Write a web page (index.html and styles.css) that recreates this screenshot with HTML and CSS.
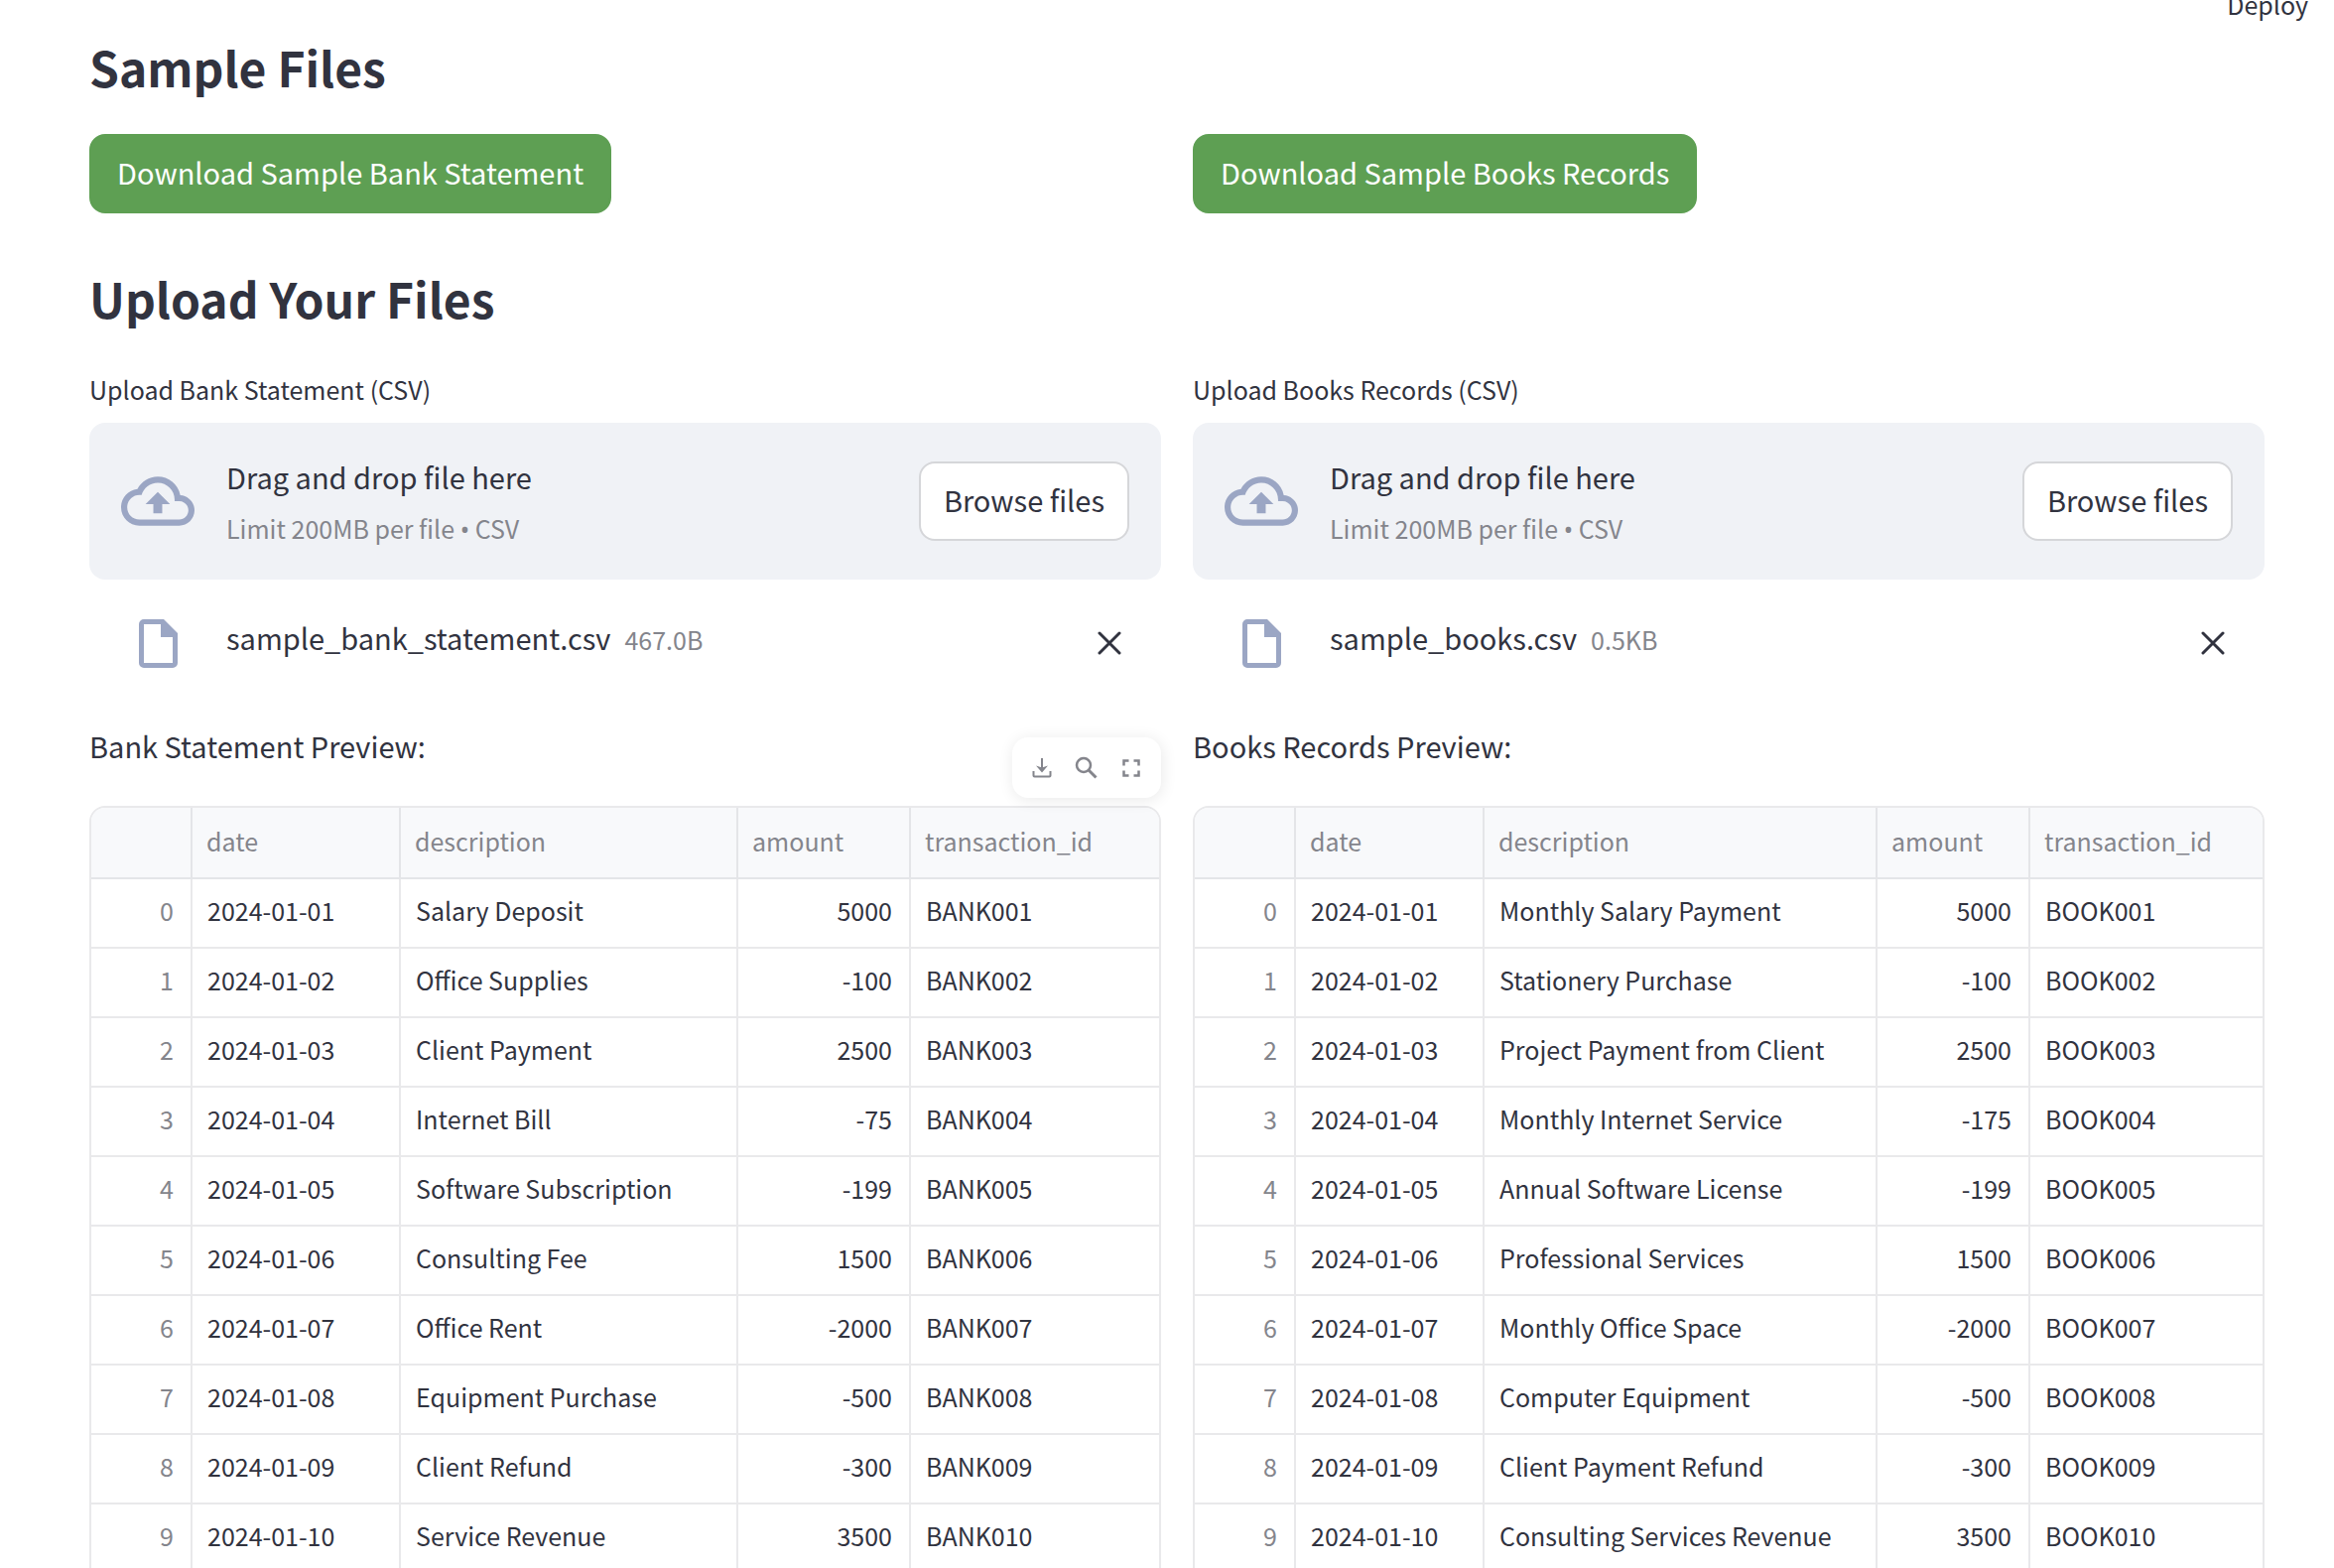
FILE: index.html
```html
<!DOCTYPE html>
<html lang="en">
<head>
<meta charset="utf-8">
<title>Reconciliation</title>
<link rel="stylesheet" href="styles.css">
</head>
<body>
<header class="topbar"><button class="deploy" type="button">Deploy</button></header>
<main class="page">
  <h2 class="heading">Sample Files</h2>
  <div class="columns downloads">
    <div><button class="btn btn-green" type="button">Download Sample Bank Statement</button></div>
    <div><button class="btn btn-green" type="button">Download Sample Books Records</button></div>
  </div>
  <h2 class="heading">Upload Your Files</h2>
  <div class="columns">
    <section class="column" id="bank"></section>
    <section class="column" id="books"></section>
  </div>
</main>
<script src="app.js"></script>
</body>
</html>
```
FILE: styles.css
```css
* { box-sizing: border-box; }

body {
  display: flex;
  flex-direction: column;
  height: 100vh;
  margin: 0;
  background: #fff;
  color: #31333f;
  font-family: "Noto Sans CJK SC", "Noto Sans", sans-serif;
  font-size: 29px;
  line-height: 48px;
}

button { font: inherit; color: inherit; cursor: pointer; }
svg { display: block; flex: none; }

.topbar {
  display: flex;
  flex: none;
  justify-content: flex-end;
  align-items: flex-end;
  height: 22px;
  padding-right: 26px;
}
.deploy { border: 0; padding: 0; background: none; font-size: 25px; line-height: 36px; }

.page { flex: 1; min-height: 0; overflow-y: auto; scrollbar-width: none; padding: 0 70px 0 90px; }
.heading { margin: 0; font-size: 48px; line-height: 64px; font-weight: 600; padding: 13px 0 36px; }
.columns { display: grid; grid-template-columns: 1fr 1fr; gap: 32px; }
.downloads { margin-bottom: 40px; }
.downloads > div { display: flex; }
.column { min-width: 0; }

.btn {
  height: 80px;
  padding: 0 23px 4px;
  border: 2px solid #d5d6d9;
  border-radius: 16px;
  background: #fff;
}
.btn-green { padding: 0 26px 5px; border-color: #5e9f53; background: #5e9f53; color: #fff; }

.upload-label { display: block; font-size: 25px; line-height: 40px; padding: 4px 0 14px; }
.dropzone {
  display: flex;
  align-items: center;
  gap: 32px;
  height: 158px;
  padding: 0 32px;
  border-radius: 16px;
  background: #f0f2f6;
}
.icon-muted { color: #9ba6c4; }
.drop-text { flex: 1; display: grid; gap: 4px; padding-top: 3px; }
.drop-hint { font-size: 25px; color: #84858c; }
.dot { font-family: "Noto Sans", sans-serif; }
.visually-hidden { position: absolute; width: 1px; height: 1px; overflow: hidden; clip-path: inset(50%); }

.file { display: flex; align-items: center; height: 128px; padding: 0 32px; gap: 32px; }
.file-icon { width: 74px; display: flex; justify-content: center; }
.file-name { flex: 1; display: flex; gap: 14px; align-items: baseline; padding-bottom: 10px; }
.file-size { font-size: 25px; color: #84858c; }
.remove { border: 0; padding: 8px; background: none; }

.preview-head { position: relative; height: 100px; padding-top: 15px; }
.preview-head p { margin: 0; }
.toolbar {
  position: absolute;
  right: 0;
  bottom: 8px;
  display: flex;
  align-items: center;
  justify-content: space-between;
  width: 150px;
  height: 61px;
  padding: 0 18px;
  border-radius: 16px;
  background: #fff;
  box-shadow: 1px 2px 16px rgba(0, 0, 0, .09);
}
.tool { border: 0; padding: 0; background: none; color: #84858c; }

.table-frame { border: 2px solid #e9e9eb; border-radius: 16px 16px 0 0; overflow: hidden; }
.data { width: 100%; border-collapse: separate; border-spacing: 0; table-layout: fixed; font-size: 25px; line-height: 36px; }
.data th, .data td {
  height: 70px;
  padding: 0 17px 6px 15px;
  border: 0 solid #e9e9eb;
  border-width: 0 2px 2px 0;
  text-align: left;
  font-weight: 400;
  white-space: nowrap;
}
.data th:last-child, .data td:last-child { border-right: 0; }
.data thead th { height: 72px; padding: 0 14px 4px; background: #f8f9fb; color: #84858c; border-color: #e4e5e8; }
.data tbody th { text-align: right; color: #84858c; }
.data .num { text-align: right; }
```
FILE: app.js
```js
const icons = {
  cloud: '<svg class="icon-muted" width="74" height="74" viewBox="0 0 24 24" fill="currentColor"><path d="M19.35 10.04A7.49 7.49 0 0 0 12 4C9.11 4 6.6 5.64 5.35 8.04A5.994 5.994 0 0 0 0 14c0 3.31 2.69 6 6 6h13c2.76 0 5-2.24 5-5 0-2.64-2.05-4.78-4.65-4.96zM19 18H6c-2.21 0-4-1.79-4-4s1.79-4 4-4h.71C7.37 7.69 9.48 6 12 6c3.04 0 5.5 2.46 5.5 5.5v.5H19c1.66 0 3 1.34 3 3s-1.34 3-3 3zM8 13h2.55v3h2.9v-3H16l-4-4z"/></svg>',
  file: '<svg class="icon-muted" width="39" height="49" viewBox="0 0 39 49"><path d="M25 2.500H5A2.500 2.500 0 0 0 2.500 5v39A2.500 2.500 0 0 0 5 46.500h29a2.500 2.500 0 0 0 2.500-2.500V15" fill="none" stroke="currentColor" stroke-width="5"/><path d="M22 0h3l14 14v4H22z" fill="currentColor"/></svg>',
  close: '<svg width="24" height="24" viewBox="0 0 24 24" fill="none" stroke="currentColor" stroke-width="3" stroke-linecap="round"><path d="M2 2l20 20M22 2L2 22"/></svg>',
  download: '<svg width="24" height="24" viewBox="0 0 24 24" fill="none" stroke="currentColor" stroke-width="2"><path d="M12 2v12"/><path d="M3.500 15v4.500a1 1 0 0 0 1 1h15a1 1 0 0 0 1-1V15"/><path d="M6 9.500l6 2 6-2-6 7z" fill="currentColor" stroke="none"/></svg>',
  search: '<svg width="24" height="24" viewBox="0 0 24 24" fill="none" stroke="currentColor"><circle cx="9" cy="9" r="7" stroke-width="2.500"/><path d="M14 14l7.500 7.500" stroke-width="3"/></svg>',
  full: '<svg width="24" height="24" viewBox="0 0 24 24" fill="none" stroke="currentColor" stroke-width="2.500"><path d="M4.500 9.500v-5h5M14.500 4.500h5v5M19.500 14.500v5h-5M9.500 19.500h-5v-5"/></svg>'
};

const sources = [
  {
    id: "bank", label: "Upload Bank Statement (CSV)", file: "sample_bank_statement.csv", size: "467.0B",
    title: "Bank Statement Preview:", prefix: "BANK", toolbar: true, widths: [102, 210, 340, 174, 250],
    rows: [["Salary Deposit", 5000], ["Office Supplies", -100], ["Client Payment", 2500], ["Internet Bill", -75], ["Software Subscription", -199], ["Consulting Fee", 1500], ["Office Rent", -2000], ["Equipment Purchase", -500], ["Client Refund", -300], ["Service Revenue", 3500]]
  },
  {
    id: "books", label: "Upload Books Records (CSV)", file: "sample_books.csv", size: "0.5KB",
    title: "Books Records Preview:", prefix: "BOOK", toolbar: false, widths: [102, 190, 396, 154, 234],
    rows: [["Monthly Salary Payment", 5000], ["Stationery Purchase", -100], ["Project Payment from Client", 2500], ["Monthly Internet Service", -175], ["Annual Software License", -199], ["Professional Services", 1500], ["Monthly Office Space", -2000], ["Computer Equipment", -500], ["Client Payment Refund", -300], ["Consulting Services Revenue", 3500]]
  }
];

const tools = [["download", "Download"], ["search", "Search"], ["full", "Fullscreen"]];

for (const s of sources) {
  const total = s.widths.reduce((a, b) => a + b);
  const cols = s.widths.map(w => `<col style="width:${w / total * 100}%">`).join("");
  const body = s.rows.map(([text, amount], i) => {
    const n = String(i + 1);
    return `<tr><th scope="row">${i}</th><td>2024-01-${n.padStart(2, "0")}</td><td>${text}</td><td class="num">${amount}</td><td>${s.prefix}${n.padStart(3, "0")}</td></tr>`;
  }).join("");
  const toolbar = s.toolbar
    ? `<div class="toolbar">${tools.map(([k, l]) => `<button class="tool" type="button" aria-label="${l}">${icons[k]}</button>`).join("")}</div>`
    : "";
  document.getElementById(s.id).innerHTML = `
    <label class="upload-label" for="${s.id}-file">${s.label}</label>
    <div class="dropzone">
      ${icons.cloud}
      <div class="drop-text"><div>Drag and drop file here</div><div class="drop-hint">Limit 200MB per file <span class="dot">•</span> CSV</div></div>
      <input class="visually-hidden" type="file" accept=".csv" id="${s.id}-file">
      <button class="btn" type="button">Browse files</button>
    </div>
    <div class="file">
      <div class="file-icon">${icons.file}</div>
      <div class="file-name"><span>${s.file}</span><span class="file-size">${s.size}</span></div>
      <button class="remove" type="button" aria-label="Remove file">${icons.close}</button>
    </div>
    <div class="preview-head"><p>${s.title}</p>${toolbar}</div>
    <div class="table-frame"><table class="data"><colgroup>${cols}</colgroup>
      <thead><tr><th></th><th>date</th><th>description</th><th>amount</th><th>transaction_id</th></tr></thead>
      <tbody>${body}</tbody></table></div>`;
}
```
